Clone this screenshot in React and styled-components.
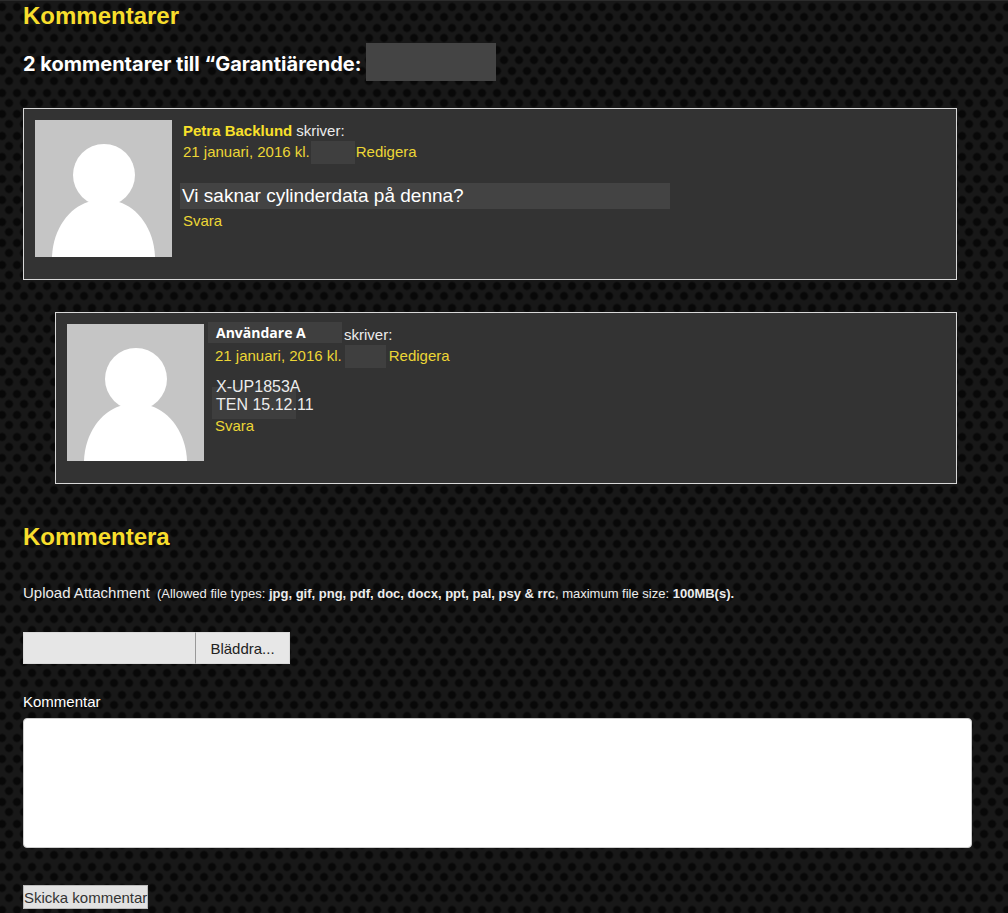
import React from 'react'
import styled, { createGlobalStyle } from 'styled-components'

const GlobalStyle = createGlobalStyle`
  * {
    box-sizing: border-box;
  }

  body {
    margin: 0;
    background-color: #181818;
    background-image:
      radial-gradient(circle at 2px 7px, #080808 3px, transparent 5px),
      radial-gradient(circle at 17px 7px, #080808 3px, transparent 5px),
      radial-gradient(circle at 32px 7px, #080808 3px, transparent 5px),
      radial-gradient(circle at 9px 17px, #080808 3px, transparent 5px),
      radial-gradient(circle at 24px 17px, #080808 3px, transparent 5px),
      radial-gradient(circle at 2px 28px, #080808 3px, transparent 5px),
      radial-gradient(circle at 17px 28px, #080808 3px, transparent 5px),
      radial-gradient(circle at 32px 28px, #080808 3px, transparent 5px),
      radial-gradient(circle at 9px 38px, #080808 3px, transparent 5px),
      radial-gradient(circle at 24px 38px, #080808 3px, transparent 5px);
    background-size: 30px 43px;
    color: #ececec;
    font-family: "Liberation Sans", Arial, sans-serif;
    font-size: 15px;
    line-height: 21px;
  }
`

const Page = styled.main`
  border-top: 1px solid #2b2b2b;
  padding: 0 36px 4px 23px;
`

const Title = styled.h2`
  color: #f8de2c;
  font-size: 24px;
  line-height: 30px;
  margin: 0;
`

const Subtitle = styled.h3`
  color: #fff;
  display: flex;
  font-family: Inter, "Liberation Sans", sans-serif;
  font-size: 20px;
  gap: 5px;
  line-height: 42px;
  margin: 12px 0 23px;
`

const Redacted = styled.span`
  background: ${props => props.color || '#3f3f3f'};
  flex: none;
  height: ${props => props.height || 23}px;
  width: ${props => props.width}px;
`

const CommentList = styled.ol`
  display: flex;
  flex-direction: column;
  gap: 32px;
  list-style: none;
  margin: 0 15px 38px 0;
  padding: 0;
`

const Card = styled.li`
  background: #333;
  border: 1px solid #d8d8d8;
  display: flex;
  gap: 11px;
  margin-left: ${props => props.depth * 32}px;
  padding: 11px 11px 22px;
`

const Avatar = styled.svg`
  background: #c5c5c5;
  flex: none;
  height: 137px;
  width: 137px;
`

const Body = styled.div`
  flex: 1;
  min-width: 0;
`

const Line = styled.div`
  align-items: flex-start;
  display: flex;
  gap: ${props => props.gap || 0}px;
  height: 21px;
`

const Link = styled.a`
  color: #ecd636;
  text-decoration: none;
`

const AuthorLink = styled(Link)`
  color: #f8e02a;
  font-weight: bold;
`

const MaskedName = styled.strong`
  background: #3f3f3f;
  color: #fff;
  font-family: "Open Sans", "Noto Sans", sans-serif;
  font-size: 14px;
  margin: -2px 0 0 -7px;
  padding-left: 8px;
  width: 134px;
`

const Question = styled.p`
  background: #434343;
  color: #fff;
  font-size: 19px;
  line-height: 26px;
  margin: 21px 0 1px -3px;
  max-width: 490px;
  padding-left: 2px;
`

const Details = styled.p`
  font-size: 16px;
  line-height: 18px;
  margin: 12px 0 1px -3px;
  padding-left: 4px;
  position: relative;
  z-index: 0;

  &::before {
    background: #3e3e3e;
    bottom: -5px;
    content: "";
    height: 32px;
    left: 0;
    position: absolute;
    width: 84px;
    z-index: -1;
  }
`

const UploadLabel = styled.label`
  display: block;
  margin: 30px 0 28px;
`

const Hint = styled.small`
  font-size: 13px;
  margin-left: 3px;
`

const FilePicker = styled.div`
  display: flex;
  height: 32px;
  margin-bottom: 27px;
  width: 267px;
`

const FileName = styled.input`
  background: #e6e6e6;
  border: 1px solid #dadada;
  border-right: none;
  flex: 1;
  font: inherit;
  min-width: 0;
  padding: 0 8px;
`

const BrowseButton = styled.button`
  background: #e7e7e7;
  border: 1px solid #dadada;
  border-left-color: #999;
  color: #222;
  font: inherit;
  padding: 0;
  width: 95px;
`

const FieldLabel = styled.label`
  color: #fff;
  display: block;
  margin-bottom: 6px;
`

const TextArea = styled.textarea`
  background: #fff;
  border: 1px solid #ccc;
  border-radius: 4px;
  display: block;
  font: inherit;
  height: 130px;
  margin-bottom: 37px;
  padding: 8px;
  resize: none;
  width: 100%;
`

const SubmitButton = styled.button`
  background: #e2e2e2;
  border: 1px solid #bbb;
  color: #333;
  display: block;
  font: inherit;
  height: 24px;
  padding: 0;
`

const Person = () => (
  <Avatar viewBox="0 0 137 137" role="img" aria-label="Avatar">
    <ellipse cx="69" cy="55" rx="31" ry="31" fill="#fff" />
    <path d="M17 137C18 109 34 88 53 82H84C103 88 119 109 120 137Z" fill="#fff" />
  </Avatar>
)

const Upload = () => {
  const [fileName, setFileName] = React.useState('')
  const fileInput = React.useRef(null)

  const handleFile = e => {
    setFileName(e.target.files.length ? e.target.files[0].name : '')
  }

  return (
    <>
      <UploadLabel htmlFor="attachment-name">
        Upload Attachment{' '}
        <Hint>
          (Allowed file types: <b>jpg, gif, png, pdf, doc, docx, ppt, pal, psy &amp; rrc</b>, maximum file size: <b>100MB(s).</b>
        </Hint>
      </UploadLabel>
      <FilePicker>
        <FileName id="attachment-name" value={ fileName } readOnly />
        <BrowseButton type="button" onClick={ () => fileInput.current.click() }>Bläddra...</BrowseButton>
        <input ref={ fileInput } type="file" aria-label="Attachment" hidden onChange={ handleFile } />
      </FilePicker>
    </>
  )
}

const App = () => (
  <>
    <GlobalStyle />
    <Page>
      <Title>Kommentarer</Title>
      <Subtitle>
        2 kommentarer till “Garantiärende:
        <Redacted width={ 130 } height={ 38 } color="#444" />
      </Subtitle>

      <CommentList>
        <Card depth={ 0 }>
          <Person />
          <Body>
            <Line gap={ 4 }>
              <AuthorLink href="#petra">Petra Backlund</AuthorLink>
              <span>skriver:</span>
            </Line>
            <Line gap={ 1 }>
              <Link href="#comment-1">21 januari, 2016 kl.</Link>
              <Redacted width={ 44 } />
              <Link href="#edit-1">Redigera</Link>
            </Line>
            <Question>Vi saknar cylinderdata på denna?</Question>
            <Link href="#reply-1">Svara</Link>
          </Body>
        </Card>

        <Card depth={ 1 }>
          <Person />
          <Body>
            <Line gap={ 2 }>
              <MaskedName>Användare A</MaskedName>
              <span>skriver:</span>
            </Line>
            <Line gap={ 3 }>
              <Link href="#comment-2">21 januari, 2016 kl.</Link>
              <Redacted width={ 41 } />
              <Link href="#edit-2">Redigera</Link>
            </Line>
            <Details>
              X-UP1853A<br />
              TEN 15.12.11
            </Details>
            <Link href="#reply-2">Svara</Link>
          </Body>
        </Card>
      </CommentList>

      <Title>Kommentera</Title>
      <form onSubmit={ e => e.preventDefault() }>
        <Upload />
        <FieldLabel htmlFor="comment">Kommentar</FieldLabel>
        <TextArea id="comment" name="comment" />
        <SubmitButton type="submit">Skicka kommentar</SubmitButton>
      </form>
    </Page>
  </>
)

export default App
